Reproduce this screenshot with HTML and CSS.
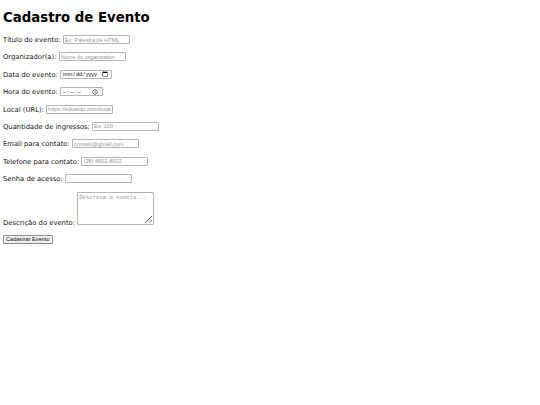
FILE: index.html
```html
<!DOCTYPE html>
<html lang="pt-BR">
<head>
    <meta charset="UTF-8">
    <meta name="viewport" content="width=device-width, initial-scale=1.0">
    <title>Cadastro de Evento</title>
    <link rel="stylesheet" href="styles.css">
</head>
<body>

    <h1>Cadastro de Evento</h1>

    <form id="formEvento">
        <p class="campo">
            <label for="titulo">Título do evento:</label>
            <input type="text" id="titulo" placeholder="Ex: Palestra de HTML">
        </p>
        <p class="campo">
            <label for="organizador">Organizador(a):</label>
            <input type="text" id="organizador" placeholder="Nome do organizador">
        </p>
        <p class="campo">
            <label for="data">Data do evento:</label>
            <input type="date" id="data" class="data">
        </p>
        <p class="campo">
            <label for="hora">Hora do evento:</label>
            <input type="time" id="hora" class="hora">
        </p>
        <p class="campo">
            <label for="local">Local (URL):</label>
            <input type="url" id="local" placeholder="https://eduardo.com/local">
        </p>
        <p class="campo">
            <label for="ingressos">Quantidade de ingressos:</label>
            <input type="number" id="ingressos" placeholder="Ex: 100">
        </p>
        <p class="campo">
            <label for="email">Email para contato:</label>
            <input type="email" id="email" placeholder="contato@gmail.com">
        </p>
        <p class="campo">
            <label for="telefone">Telefone para contato:</label>
            <input type="tel" id="telefone" placeholder="(38) 4002-8922">
        </p>
        <p class="campo">
            <label for="senha">Senha de acesso:</label>
            <input type="password" id="senha">
        </p>
        <p class="campo">
            <label for="descricao">Descrição do evento:</label>
            <textarea id="descricao" placeholder="Descreva o evento..."></textarea>
        </p>
        <button type="submit" class="enviar">Cadastrar Evento</button>
    </form>

</body>
</html>
```

FILE: styles.css
```css
body { margin: 3px; font-family: "DejaVu Sans", Verdana, sans-serif; font-size: 6.8px; color: #111; background: #fff; }
h1 { font-size: 13.3px; margin: 7px 0 10px; color: #000; }
.campo { margin: 0 0 8.4px; }
input, button { font-family: "Liberation Sans", Arial, sans-serif; font-size: 5.6px; }
input { width: 67px; height: 9px; box-sizing: border-box; padding: 0 1px; border: 1px solid #b4b4b4; border-radius: 1px; vertical-align: baseline; }
input::placeholder { color: #959595; }
input::-webkit-inner-spin-button { display: none; }
input.data { width: 52px; }
input.hora { width: 43px; }
textarea { width: 77px; height: 33px; box-sizing: border-box; padding: 1px; border: 1px solid #b4b4b4; border-radius: 1px; font-family: "DejaVu Sans Mono", monospace; font-size: 5.6px; resize: vertical; vertical-align: baseline; }
textarea::placeholder { color: #959595; }
.enviar { height: 9px; padding: 0 2px; line-height: 1; border: 1px solid #8c8c8c; border-radius: 1px; background: #efefef; color: #111; }
```
